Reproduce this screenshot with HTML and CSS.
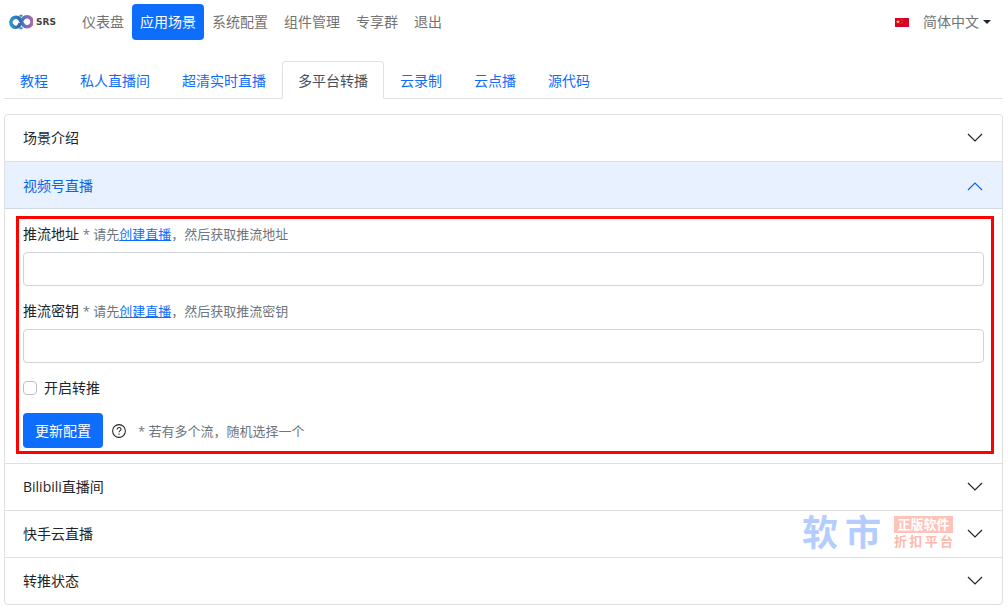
FILE: index.html
```html
<!DOCTYPE html>
<html lang="zh-CN">
<head>
<meta charset="utf-8">
<meta name="viewport" content="width=device-width, initial-scale=1">
<title>SRS</title>
<link rel="stylesheet" href="styles.css">
</head>
<body>
<header class="navbar">
  <a class="brand" href="#" aria-label="SRS">
    <svg class="brand-mark" viewBox="0 0 24 16" aria-hidden="true">
      <defs>
        <linearGradient id="loop" x1="0" x2="24" y1="0" y2="0" gradientUnits="userSpaceOnUse">
          <stop offset="0" stop-color="#2a9fd0"/><stop offset=".45" stop-color="#2d6aa6"/>
          <stop offset=".6" stop-color="#5b74bd"/><stop offset="1" stop-color="#b565a6"/>
        </linearGradient>
      </defs>
      <path d="M10 12.200 A5 5 0 1 1 10.500 4.800 L14.500 11.200 A5 5 0 1 0 14.500 4.200 L12.800 6.500 M11.300 9.500 L9.500 12.500" fill="none" stroke="url(#loop)" stroke-width="3.600"/>
      <path d="M10.500 1.800h3M10.500 14.200h3" stroke="#2b8ccc" stroke-width="2"/>
    </svg>
    <span class="brand-name">SRS</span>
  </a>
  <nav class="main-nav">
    <a href="#">仪表盘</a>
    <a href="#" class="active" aria-current="page">应用场景</a>
    <a href="#">系统配置</a>
    <a href="#">组件管理</a>
    <a href="#">专享群</a>
    <a href="#">退出</a>
  </nav>
  <button class="language" type="button" aria-haspopup="true">
    <svg class="flag" viewBox="0 0 14 9" aria-hidden="true">
      <path fill="#d80027" d="M0 0h14v9H0z"/>
      <path fill="#ffda44" d="m3 1.800.5 1.300H5L3.900 4l.4 1.400L3 4.600l-1.300.8L2.100 4 1 3.100h1.500z"/>
      <path fill="#e8763a" d="M5.700 1h.9v.8h-.9zM7 2.300h.8v.8H7zM7 4h.8v.8H7zM5.700 5.300h.9v.8h-.9z"/>
    </svg>
    <span>简体中文</span>
    <span class="caret"></span>
  </button>
</header>

<main class="page">
  <nav class="tabs">
    <a href="#">教程</a>
    <a href="#">私人直播间</a>
    <a href="#">超清实时直播</a>
    <a href="#" class="active" aria-current="page">多平台转播</a>
    <a href="#">云录制</a>
    <a href="#">云点播</a>
    <a href="#">源代码</a>
  </nav>

  <div class="accordion">
    <section class="item">
      <button class="item-header" type="button" aria-expanded="false">场景介绍
        <svg class="chevron" viewBox="0 0 16 16" aria-hidden="true"><path d="m1 4 7 7 7-7"/></svg>
      </button>
    </section>
    <section class="item">
      <button class="item-header open" type="button" aria-expanded="true">视频号直播
        <svg class="chevron" viewBox="0 0 16 16" aria-hidden="true"><path d="m1 12 7-7 7 7"/></svg>
      </button>
      <form class="item-body">
        <div class="field">
          <div class="field-label"><label for="server">推流地址</label> <span class="hint">* 请先<a href="#">创建直播</a>，然后获取推流地址</span></div>
          <input class="text-input" id="server" type="text">
        </div>
        <div class="field">
          <div class="field-label"><label for="secret">推流密钥</label> <span class="hint">* 请先<a href="#">创建直播</a>，然后获取推流密钥</span></div>
          <input class="text-input" id="secret" type="text">
        </div>
        <div class="check">
          <input id="enabled" type="checkbox">
          <label for="enabled">开启转推</label>
        </div>
        <div class="actions">
          <button class="submit" type="button">更新配置</button>
          <svg class="help" viewBox="0 0 16 16" aria-hidden="true">
            <circle cx="8" cy="8" r="7.300"/>
            <path d="M5.800 6.200c0-3 4.500-3 4.500-.2 0 1.700-2.200 1.600-2.200 3.500M8 10.800v1.500"/>
          </svg>
          <span class="hint">* 若有多个流，随机选择一个</span>
        </div>
        <div class="highlight"></div>
      </form>
    </section>
    <section class="item">
      <button class="item-header" type="button" aria-expanded="false">Bilibili直播间
        <svg class="chevron" viewBox="0 0 16 16" aria-hidden="true"><path d="m1 4 7 7 7-7"/></svg>
      </button>
    </section>
    <section class="item">
      <button class="item-header" type="button" aria-expanded="false">快手云直播
        <svg class="chevron" viewBox="0 0 16 16" aria-hidden="true"><path d="m1 4 7 7 7-7"/></svg>
      </button>
      <div class="watermark">
        <span class="mark-name"><span>软</span><span>市</span></span>
        <span class="mark-lines">
          <span class="mark-badge">正版软件</span>
          <span class="mark-sub"><span>折</span><span>扣</span><span>平</span><span>台</span></span>
        </span>
      </div>
    </section>
    <section class="item">
      <button class="item-header" type="button" aria-expanded="false">转推状态
        <svg class="chevron" viewBox="0 0 16 16" aria-hidden="true"><path d="m1 4 7 7 7-7"/></svg>
      </button>
    </section>
  </div>
</main>
</body>
</html>
```
FILE: styles.css
```css
* { box-sizing: border-box; }

body {
  margin: 0;
  background: #fff;
  color: #212529;
  font: 14px/22px "Open Sans", "Noto Sans CJK SC", sans-serif;
}

button, input { font: inherit; color: inherit; }
a { color: #0d6efd; text-decoration: none; }

.navbar {
  display: flex;
  align-items: center;
  height: 44px;
  padding: 0 17px 0 9px;
}

.brand {
  display: flex;
  align-items: center;
  gap: 3px;
  width: 65px;
}
.brand-mark { width: 24px; height: 16px; }
.brand-name {
  color: #444;
  font: bold 9px/12px "DejaVu Sans", sans-serif;
}

.main-nav { display: flex; }
.main-nav a {
  padding: 7px 8px;
  border-radius: 4px;
  color: #737373;
}
.main-nav .active { background: #0d6efd; color: #fff; }

.language {
  display: flex;
  align-items: center;
  margin-left: auto;
  padding: 0;
  border: 0;
  background: none;
  color: #737373;
}
.flag { width: 14px; height: 9px; margin-right: 14px; }
.caret {
  margin-left: 4px;
  border: 4px solid transparent;
  border-top-color: #212529;
  border-bottom: 0;
}

.page { padding: 17px 5px 5px 4px; }

.tabs {
  display: flex;
  margin-bottom: 15px;
  border-bottom: 1px solid #dee2e6;
}
.tabs a {
  margin-bottom: -1px;
  padding: 8px 15px 6px;
  border: 1px solid transparent;
  border-radius: 4px 4px 0 0;
}
.tabs .active {
  border-color: #dee2e6 #dee2e6 #fff;
  background: #fff;
  color: #495057;
}

.accordion {
  border: 1px solid #dfdfdf;
  border-radius: 4px;
}
.item { position: relative; }
.item + .item { border-top: 1px solid #dfdfdf; }
.item-header {
  display: flex;
  align-items: center;
  justify-content: space-between;
  width: 100%;
  padding: 12px 19px 12px 18px;
  border: 0;
  background: none;
  text-align: left;
}
.item-header.open {
  padding: 13px 19px 12px 18px;
  background: #e7f1ff;
  color: #0c63e4;
  box-shadow: inset 0 -1px #ced8e6;
}
.chevron {
  width: 16px;
  height: 16px;
  fill: none;
  stroke: currentColor;
  stroke-width: 1.2;
}

.item-body { position: relative; padding: 14px 18px 15px; }
.field { margin-bottom: 14px; }
.field-label { margin-bottom: 7px; }
.hint { color: #6c757d; font-size: 13px; }
.hint a { text-decoration: underline; }
.text-input {
  display: block;
  width: 100%;
  height: 34px;
  padding: 5px 11px;
  border: 1px solid #ced4da;
  border-radius: 4px;
}

.check {
  display: flex;
  align-items: center;
  gap: 7px;
  margin-bottom: 14px;
}
.check input {
  appearance: none;
  width: 14px;
  height: 14px;
  margin: 0;
  border: 1px solid #bfbfbf;
  border-radius: 4px;
}

.actions { display: flex; align-items: center; }
.submit {
  padding: 7px 12px 6px;
  border: 0;
  border-radius: 4px;
  background: #0d6efd;
  color: #fff;
}
.help {
  width: 14px;
  height: 14px;
  margin: 0 12px 0 9px;
  fill: none;
  stroke: #212529;
  stroke-width: 1.2;
}

.highlight {
  position: absolute;
  inset: 7px 8px 9px 11px;
  border: 3px solid #f00;
  pointer-events: none;
}

.watermark {
  position: absolute;
  top: 0;
  right: 49px;
  display: flex;
  align-items: center;
  gap: 13px;
  height: 43px;
  pointer-events: none;
}
.mark-name {
  display: flex;
  gap: 7px;
  color: #b3cdff;
  font-size: 36px;
  font-weight: bold;
  line-height: 40px;
}
.mark-lines { width: 59px; font-size: 13px; line-height: 17px; }
.mark-badge {
  display: block;
  background: #ffc2b8;
  color: #fff;
  font-weight: bold;
  text-align: center;
}
.mark-sub {
  display: flex;
  justify-content: space-between;
  color: #ffb9ad;
  font-weight: bold;
}
```
